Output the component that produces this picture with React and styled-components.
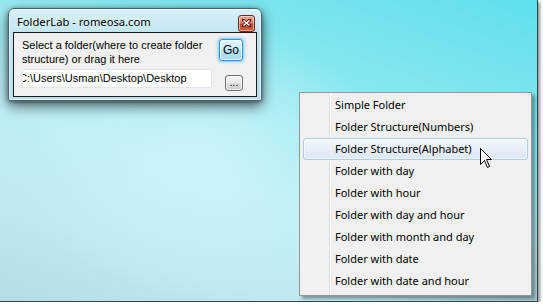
import React from "react";
import styled, { createGlobalStyle } from "styled-components";

const Global = createGlobalStyle`
  html, body { margin: 0; padding: 0; background: #ffffff; }
  body { font-family: "Noto Sans", "Open Sans", sans-serif; }
`;

const Desktop = styled.div`
  position: relative;
  width: 537px;
  height: 301px;
  overflow: hidden;
  border-right: 1px solid #34474b;
  border-bottom: 1px solid #34474b;
  box-shadow: 2px 2px 3px rgba(0, 0, 0, 0.45);
  background:
    radial-gradient(ellipse 260px 200px at 200px 160px, rgba(205, 244, 248, 0.9), rgba(205, 244, 248, 0) 70%),
    radial-gradient(ellipse 260px 200px at 540px 310px, rgba(160, 196, 204, 0.9), rgba(160, 196, 204, 0) 75%),
    linear-gradient(200deg, #5fdfec 0%, #86e7f0 30%, #bdeff4 60%, #bfe9ef 80%, #b3dde5 100%);
`;

const Window = styled.div`
  position: absolute;
  left: 8px;
  top: 8px;
  width: 252px;
  height: 91px;
  display: flex;
  flex-direction: column;
  border: 1px solid #4b6473;
  border-radius: 6px 6px 2px 2px;
  background: linear-gradient(180deg, #d9f1f8 0%, #c2e6f1 25%, #b8e1ee 100%);
  box-shadow: 0 0 0 1px rgba(255, 255, 255, 0.6) inset, 0 5px 14px rgba(0, 0, 0, 0.6),
    0 1px 4px rgba(0, 0, 0, 0.4);
`;

const TitleBar = styled.div`
  height: 23px;
  display: flex;
  align-items: center;
  justify-content: space-between;
  padding: 0 6px 0 8px;
`;

const Title = styled.span`
  font-size: 11.2px;
  color: #000;
  text-shadow: 0 0 6px rgba(255, 255, 255, 0.9);
  margin-top: 2px;
`;

const CloseButton = styled.div`
  width: 15px;
  height: 15px;
  margin-top: 5px;
  display: flex;
  align-items: center;
  justify-content: center;
  border: 1px solid #6e2a22;
  border-radius: 3px;
  background: linear-gradient(180deg, #eaa896 0%, #dc7d62 45%, #c8452b 55%, #d0603f 100%);
  box-shadow: 0 0 0 1px rgba(255, 255, 255, 0.5) inset;
`;

const Client = styled.div`
  flex: 1;
  margin: 0 4px 3px 4px;
  border: 1px solid #1c1c1c;
  background: #f0f0f0;
  display: grid;
  grid-template-columns: 190px 1fr;
  grid-template-rows: 30px auto;
  row-gap: 2px;
  justify-items: start;
  padding: 4px 13px 0 8px;
  font-family: "Liberation Sans", Arial, sans-serif;
`;

const Label = styled.div`
  font-size: 11px;
  line-height: 14px;
  padding-top: 1px;
  color: #000;
  white-space: nowrap;
`;

const GoButton = styled.div`
  justify-self: end;
  align-self: start;
  margin-top: 2px;
  width: 22px;
  height: 20px;
  border: 1px solid #3c8fd0;
  border-radius: 3px;
  background: linear-gradient(180deg, #e4f5fc 0%, #c9ebfa 50%, #b2e1f7 51%, #a7dcf5 100%);
  box-shadow: 0 0 3px 1px rgba(80, 190, 240, 0.8), 0 0 0 1px rgba(255, 255, 255, 0.7) inset;
  font-size: 12px;
  line-height: 20px;
  text-align: center;
  color: #000;
`;

const Field = styled.div`
  width: 188px;
  height: 17px;
  border: 1px solid #e2e8ee;
  background: #fff;
  overflow: hidden;
  font-size: 11px;
  line-height: 17px;
  color: #000;
  white-space: nowrap;
`;

const FieldText = styled.span`
  display: inline-block;
  margin-left: -4px;
`;

const BrowseButton = styled.div`
  justify-self: end;
  align-self: center;
  width: 16px;
  height: 14px;
  border: 1px solid #707070;
  border-radius: 3px;
  background: linear-gradient(180deg, #f2f2f2 0%, #ebebeb 50%, #dddddd 51%, #cfcfcf 100%);
  box-shadow: 0 0 0 1px rgba(255, 255, 255, 0.7) inset;
  font-size: 10px;
  line-height: 14px;
  text-align: center;
  color: #000;
`;

const Menu = styled.div`
  position: absolute;
  left: 299px;
  top: 92px;
  width: 225px;
  padding: 1px 3px 3px 3px;
  border: 1px solid #979797;
  background-color: #f0f0f0;
  background-image: linear-gradient(
    90deg,
    transparent 29px,
    #e2e3e3 29px,
    #e2e3e3 30px,
    #ffffff 30px,
    #ffffff 31px,
    transparent 31px
  );
  box-shadow: 3px 3px 3px rgba(0, 0, 0, 0.35);
`;

const Item = styled.div`
  height: 22px;
  padding-left: 31px;
  font-size: 11px;
  color: #000;
  box-sizing: border-box;
  border: 1px solid ${(p) => (p.$active ? "#aecbee" : "transparent")};
  border-radius: 3px;
  line-height: 20px;
  background: ${(p) =>
    p.$active ? "linear-gradient(180deg, #f3f7fc 0%, #e6eef8 50%, #dde8f5 100%)" : "transparent"};
  box-shadow: ${(p) => (p.$active ? "0 0 0 1px rgba(255,255,255,0.6) inset" : "none")};
`;

const Cursor = styled.svg`
  position: absolute;
  left: 480px;
  top: 148px;
`;

const items = [
  "Simple Folder",
  "Folder Structure(Numbers)",
  "Folder Structure(Alphabet)",
  "Folder with day",
  "Folder with hour",
  "Folder with day and hour",
  "Folder with month and day",
  "Folder with date",
  "Folder with date and hour",
];

export default function App() {
  return (
    <>
      <Global />
      <Desktop>
        <Window>
          <TitleBar>
            <Title>FolderLab - romeosa.com</Title>
            <CloseButton>
              <svg width="9" height="8" viewBox="0 0 9 8">
                <path d="M1 1 L8 7 M8 1 L1 7" stroke="#5a1a12" strokeWidth="3" strokeLinecap="square" />
                <path d="M1.5 1.5 L7.5 6.5 M7.5 1.5 L1.5 6.5" stroke="#ffffff" strokeWidth="1.6" />
              </svg>
            </CloseButton>
          </TitleBar>
          <Client>
            <Label>
              Select a folder(where to create folder
              <br />
              structure) or drag it here
            </Label>
            <GoButton>Go</GoButton>
            <Field>
              <FieldText>C:\Users\Usman\Desktop\Desktop</FieldText>
            </Field>
            <BrowseButton>...</BrowseButton>
          </Client>
        </Window>
        <Menu>
          {items.map((t, i) => (
            <Item key={t} $active={i === 2}>
              {t}
            </Item>
          ))}
        </Menu>
        <Cursor width="14" height="22" viewBox="0 0 14 22">
          <path
            d="M0.5 0.5 L0.5 16.5 L4.5 12.5 L7.5 19.5 L9.5 18.5 L6.5 11.5 L11.5 11.5 Z"
            fill="#fff"
            stroke="#000"
            strokeWidth="1"
          />
        </Cursor>
      </Desktop>
    </>
  );
}
